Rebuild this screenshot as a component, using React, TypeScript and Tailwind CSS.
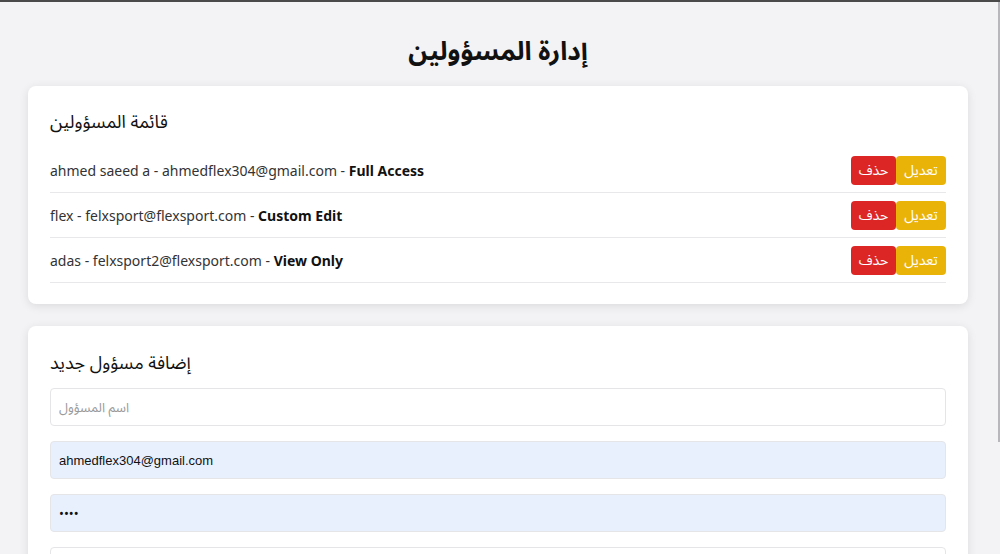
import React from "react";

const admins = [
  { name: "ahmed saeed a", email: "ahmedflex304@gmail.com", role: "Full Access" },
  { name: "flex", email: "felxsport@flexsport.com", role: "Custom Edit" },
  { name: "adas", email: "felxsport2@flexsport.com", role: "View Only" },
];

export default function App() {
  return (
    <div
      className="w-[1000px] h-[554px] overflow-hidden bg-[#f3f3f6] border-t-2 border-[#4a4a4a] relative"
      style={{ fontFamily: '"Noto Sans", "Noto Sans Arabic", "DejaVu Sans", sans-serif' }}
    >
      <div className="absolute right-0 top-0 w-[2px] h-[440px] bg-[#b8b8bc]" />
      <div className="pl-[28px] pr-[32px]">
        <h1 className="text-center text-[26px] font-bold text-[#111] pt-[28px] leading-[40px]">
          إدارة المسؤولين
        </h1>
        <div className="mt-[16px] bg-white rounded-lg shadow-[0_2px_10px_rgba(0,0,0,0.1)] px-[22px] pt-[20px] pb-[21px]">
          <h2 className="text-[18px] text-[#111] leading-[30px] mb-[12px]">قائمة المسؤولين</h2>
          <ul>
            {admins.map((a) => (
              <li
                key={a.email}
                className="flex items-center justify-between h-[45px] border-b border-[#e8e8ea] text-[14px] text-[#333]"
              >
                <span>
                  {a.name} - {a.email} - <b className="text-[#111] font-bold">{a.role}</b>
                </span>
                <div className="flex">
                  <button className="bg-[#dc2626] text-white text-[14px] h-[29px] w-[45px] rounded-[4px] leading-none">
                    حذف
                  </button>
                  <button className="bg-[#eab308] text-white text-[14px] h-[29px] w-[50px] rounded-[4px] leading-none">
                    تعديل
                  </button>
                </div>
              </li>
            ))}
          </ul>
        </div>
        <div className="mt-[22px] bg-white rounded-lg shadow-[0_2px_10px_rgba(0,0,0,0.1)] px-[22px] pt-[20px] pb-[22px]">
          <h2 className="text-[18px] text-[#111] leading-[32px] mb-[10px]">إضافة مسؤول جديد</h2>
          <div className="flex flex-col gap-[15px]">
            <input
              className="h-[38px] w-full border border-[#e5e5e8] rounded-[4px] px-[8px] text-[13px] placeholder:text-[#9a9a9a] outline-none"
              placeholder="اسم المسؤول"
            />
            <input
              className="h-[38px] w-full border border-[#e5e5e8] rounded-[4px] px-[8px] text-[13px] bg-[#e8f0fe] text-[#111] outline-none"
              style={{ fontFamily: '"Liberation Sans", Arial, sans-serif' }}
              defaultValue="ahmedflex304@gmail.com"
            />
            <input
              type="password"
              className="h-[38px] w-full border border-[#e5e5e8] rounded-[4px] px-[8px] text-[13px] bg-[#e8f0fe] text-[#111] outline-none"
              defaultValue="1234"
            />
            <input className="h-[38px] w-full border border-[#e5e5e8] rounded-[4px] px-[8px] text-[13px] outline-none" />
          </div>
        </div>
      </div>
    </div>
  );
}
